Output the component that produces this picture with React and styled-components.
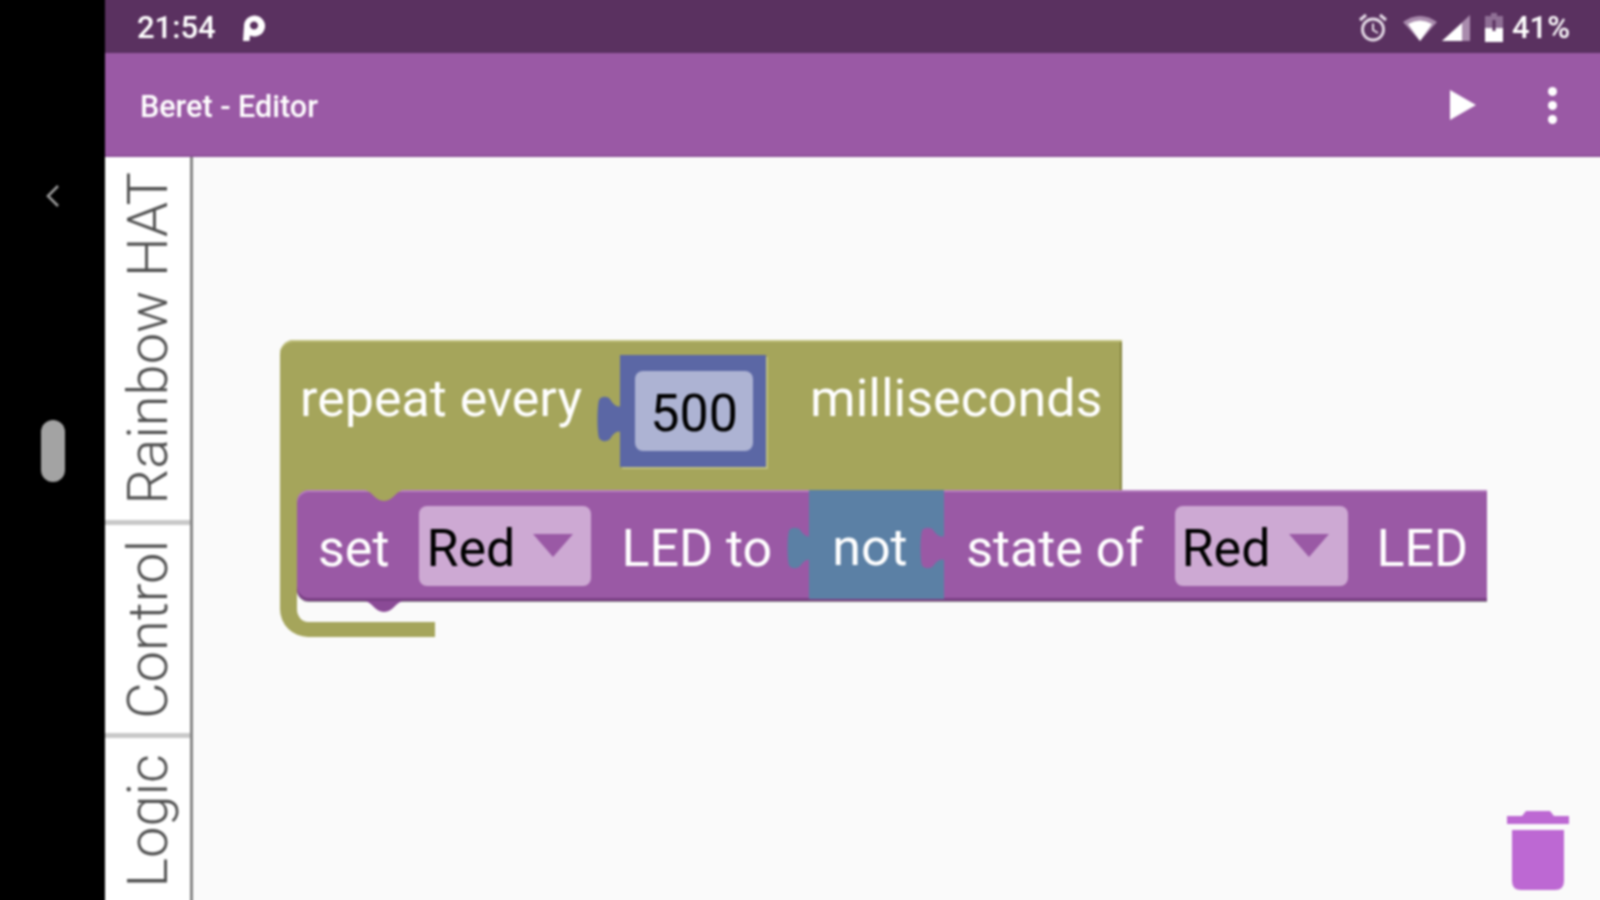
import React from "react";
import styled, { createGlobalStyle } from "styled-components";

const GlobalStyle = createGlobalStyle`
  html { overflow: hidden; }
  html, body { margin: 0; padding: 0; background: #000; }
  #root { width: 1604px; height: 908px; }
`;

const Socket = ({ color, left, top, height, right }) => (
  <SocketShape $left={left} $right={right} $top={top} width="24" height={height} viewBox="0 0 24 46" preserveAspectRatio="none">
    <path d="M24 10 C20 12 16 8 13 3 C10 0 4 0 2 4 C0 12 0 34 2 42 C4 46 10 46 13 43 C16 38 20 34 24 36 Z" fill={color} />
  </SocketShape>
);

export default function App() {
  return (
    <>
      <GlobalStyle />
      <Page>
        <Rail>
          <svg width="16" height="26" viewBox="0 0 16 26">
            <path d="M13 3 L3 13 L13 23" fill="none" stroke="#9a9a9a" strokeWidth="2.6" />
          </svg>
          <Pill />
        </Rail>
        <Main>
          <StatusBar>
            <Time>21:54</Time>
            <svg width="24" height="28" viewBox="0 0 24 28">
              <path d="M2 27 L3 12 a10.500 10.500 0 1 1 6 9.500 L8.500 27 Z M13 7.500 a4 4 0 1 0 0.010 0 Z" fill="#fff" fillRule="evenodd" />
            </svg>
            <StatusRight>
              <svg width="30" height="30" viewBox="0 0 30 30">
                <circle cx="15" cy="16.500" r="10.500" fill="none" stroke="#e6dde8" strokeWidth="2.800" />
                <path d="M15 10.500 V17 L20 20" fill="none" stroke="#e6dde8" strokeWidth="2" />
                <path d="M2 7 L8 2 M28 7 L22 2" stroke="#e6dde8" strokeWidth="3" />
              </svg>
              <WifiIcon width="36" height="28" viewBox="0 0 36 28">
                <path d="M1 8 Q18 -4 35 8 L18 27 Z" fill="#a98bad" />
                <path d="M6 10 Q18 3 30 10 L18 27 Z" fill="#fff" />
              </WifiIcon>
              <SignalIcon width="28" height="28" viewBox="0 0 28 28">
                <path d="M28 1 V27 H0 Z" fill="#a98bad" />
                <path d="M20 9 V27 H0 Z" fill="#fff" />
              </SignalIcon>
              <BatteryIcon width="18" height="29" viewBox="0 0 18 29">
                <path d="M6 0 H12 V3 H18 V29 H0 V3 H6 Z" fill="#8f6f95" />
                <path d="M0 15 H18 V29 H0 Z" fill="#fff" />
                <path d="M9 7 V18" stroke="#5a3160" strokeWidth="3" />
              </BatteryIcon>
              <Battery>41%</Battery>
            </StatusRight>
          </StatusBar>
          <AppBar>
            <Title>Beret - Editor</Title>
            <Actions>
              <svg width="28" height="32" viewBox="0 0 28 32">
                <path d="M1 1 L27 16 L1 31 Z" fill="#fff" />
              </svg>
              <Dots>
                <i /><i /><i />
              </Dots>
            </Actions>
          </AppBar>
          <Content>
            <Sidebar>
              <Tab $height={368}><TabLabel>Rainbow HAT</TabLabel></Tab>
              <Tab $height={213}><TabLabel>Control</TabLabel></Tab>
              <Tab $height={171}><TabLabel>Logic</TabLabel></Tab>
            </Sidebar>
            <Workspace>
              <RepeatBlock>
                <RepeatHead>
                  <Label>repeat every</Label>
                  <ValueBlock>
                    <Socket color="#5b67a5" left={-23} top={41} height={46} />
                    <ValueField>500</ValueField>
                  </ValueBlock>
                  <Label>milliseconds</Label>
                </RepeatHead>
                <RepeatBody>
                  <SetRow>
                    <NotchTop />
                    <NotchBottom />
                    <RowLabel $left={21}>set</RowLabel>
                    <Dropdown $left={30} $width={172}>
                      Red<Caret />
                    </Dropdown>
                    <RowLabel $left={30}>LED to</RowLabel>
                    <NotBlock>
                      <Socket color="#5b80a5" left={-22} top={37} height={42} />
                      <RowLabel>not</RowLabel>
                      <Socket color="#9a59a5" right={0} top={37} height={42} />
                    </NotBlock>
                    <RowLabel $left={22}>state of</RowLabel>
                    <Dropdown $left={31} $width={173}>
                      Red<Caret />
                    </Dropdown>
                    <RowLabel $left={29}>LED</RowLabel>
                  </SetRow>
                </RepeatBody>
              </RepeatBlock>
              <Trash>
                <svg width="64" height="82" viewBox="0 0 64 82">
                  <path d="M1 15 V7 H16 L20 2 H44 L48 7 H63 V15 Z" fill="#bd68d3" />
                  <path d="M6 21 H58 V72 Q58 81 49 81 H15 Q6 81 6 72 Z" fill="#bd68d3" />
                </svg>
              </Trash>
            </Workspace>
          </Content>
        </Main>
      </Page>
    </>
  );
}

let Page = styled.div`
  display: flex;
  width: 1604px;
  height: 908px;
  margin-top: -4px;
  background: #000;
  overflow: hidden;
  font-family: Roboto, "Liberation Sans", sans-serif;
  filter: blur(0.8px);
`;

let Rail = styled.div`
  width: 105px;
  flex: none;
  display: flex;
  flex-direction: column;
  align-items: center;
  padding-top: 187px;
  gap: 211px;
`;

let Pill = styled.div`
  width: 24px;
  height: 62px;
  border-radius: 12px;
  background: #a3a3a3;
`;

let Main = styled.div`
  flex: 1;
  min-width: 0;
  display: flex;
  flex-direction: column;
`;

let StatusBar = styled.div`
  height: 57px;
  flex: none;
  box-sizing: border-box;
  display: flex;
  align-items: center;
  gap: 25px;
  padding: 6px 34px 0 32px;
  background: #5a3160;
  color: #fff;
`;

let Time = styled.span`
  font-size: 31px;
  font-weight: 500;
`;

let StatusRight = styled.div`
  margin-left: auto;
  display: flex;
  align-items: center;
`;

let WifiIcon = styled.svg`
  margin-left: 14px;
`;

let SignalIcon = styled.svg`
  margin-left: 4px;
`;

let BatteryIcon = styled.svg`
  margin-left: 15px;
`;

let Battery = styled.span`
  margin-left: 9px;
  font-size: 31px;
  font-weight: 500;
`;

let AppBar = styled.div`
  height: 104px;
  flex: none;
  box-sizing: border-box;
  display: flex;
  align-items: center;
  padding: 3px 47px 0 35px;
  background: #9a59a5;
  box-shadow: inset 0 -2px 0 #8d4f99;
  color: #fff;
`;

let Title = styled.div`
  font-size: 30.500px;
  font-weight: 500;
`;

let Actions = styled.div`
  margin-left: auto;
  display: flex;
  align-items: center;
  gap: 71px;
  margin-top: -3px;
`;

let Dots = styled.div`
  display: flex;
  flex-direction: column;
  gap: 5px;

  i {
    width: 9px;
    height: 9px;
    border-radius: 50%;
    background: #fff;
  }
`;

let Content = styled.div`
  flex: 1;
  min-height: 0;
  display: flex;
`;

let Sidebar = styled.div`
  width: 85px;
  flex: none;
  background: #fff;
  border-right: 3px solid #858585;
  overflow: hidden;
`;

let Tab = styled.div`
  height: ${(p) => p.$height}px;
  box-sizing: border-box;
  display: flex;
  align-items: center;
  justify-content: center;
  border-bottom: 5px solid #c9c9c9;
`;

let TabLabel = styled.span`
  writing-mode: vertical-rl;
  transform: rotate(180deg);
  font-size: 56px;
  font-weight: 300;
  line-height: 1;
  color: #505050;
  white-space: nowrap;
`;

let Workspace = styled.div`
  flex: 1;
  position: relative;
  min-width: 0;
  padding: 183px 0 0 87px;
  background: #fafafa;
`;

let RepeatBlock = styled.div`
  display: flex;
  flex-direction: column;
`;

let RepeatHead = styled.div`
  width: 842px;
  height: 150px;
  box-sizing: border-box;
  display: flex;
  align-items: flex-start;
  padding: 30px 0 0 20px;
  background: #a5a55b;
  border-top-left-radius: 14px;
  box-shadow: inset 0 2px 0 #c0c07c, inset -2px 0 0 #84843f;
`;

let Label = styled.span`
  font-size: 52px;
  line-height: 58px;
  color: #fff;
  white-space: nowrap;
`;

let ValueBlock = styled.div`
  position: relative;
  width: 146px;
  height: 112px;
  box-sizing: border-box;
  flex: none;
  margin: -15px 44px 0 38px;
  padding: 16px 13px 16px 15px;
  background: #5b67a5;
  box-shadow: 2px 2px 0 #c0c07c;
`;

let SocketShape = styled.svg`
  position: absolute;
  ${(p) => (p.$right !== undefined ? `right: ${p.$right}px;` : `left: ${p.$left}px;`)}
  top: ${(p) => p.$top}px;
`;

let ValueField = styled.div`
  height: 100%;
  display: flex;
  align-items: center;
  justify-content: center;
  border-radius: 8px;
  background: #adb3d3;
  color: #000;
  font-size: 52px;
  padding-top: 4px;
  box-sizing: border-box;
`;

let RepeatBody = styled.div`
  width: 155px;
  height: 147px;
  box-sizing: border-box;
  border-left: 17px solid #a5a55b;
  border-bottom: 15px solid #a5a55b;
  border-bottom-left-radius: 28px;
  background: linear-gradient(#a5a55b 14px, transparent 14px) no-repeat;
`;

let SetRow = styled.div`
  position: relative;
  width: 1190px;
  height: 111px;
  box-sizing: border-box;
  display: flex;
  align-items: center;
  background: #9a59a5;
  border-radius: 12px 0 0 12px;
  box-shadow: inset 0 2px 0 #b77fc0, inset 0 -3px 0 #7a3f85, 0 1px 0 #8a8a8a;
`;

let NotchTop = styled.div`
  position: absolute;
  left: 68px;
  top: 0;
  width: 38px;
  height: 11px;
  background: #a5a55b;
  clip-path: path("M0 0 C8 2 10 11 19 11 C28 11 30 2 38 0 Z");
`;

let NotchBottom = styled.div`
  position: absolute;
  left: 68px;
  bottom: -11px;
  width: 38px;
  height: 11px;
  background: #8a4a96;
  clip-path: path("M0 0 C8 2 10 11 19 11 C28 11 30 2 38 0 Z");
`;

let RowLabel = styled.span`
  margin-left: ${(p) => p.$left || 0}px;
  padding-top: 6px;
  font-size: 52px;
  color: #fff;
  white-space: nowrap;
`;

let Dropdown = styled.div`
  width: ${(p) => p.$width}px;
  height: 80px;
  flex: none;
  box-sizing: border-box;
  margin-left: ${(p) => p.$left}px;
  padding: 6px 0 0 7px;
  display: flex;
  align-items: center;
  border-radius: 8px;
  background: #cda9d3;
  color: #000;
  font-size: 52px;
`;

let Caret = styled.div`
  width: 0;
  height: 0;
  margin: -6px 0 0 18px;
  border-left: 20px solid transparent;
  border-right: 20px solid transparent;
  border-top: 23px solid #9a59a5;
`;

let NotBlock = styled.div`
  position: relative;
  width: 135px;
  height: 109px;
  flex: none;
  align-self: flex-start;
  box-sizing: border-box;
  display: flex;
  align-items: center;
  padding-left: 23px;
  margin-left: 37px;
  background: #5b80a5;
`;

let Trash = styled.div`
  position: absolute;
  right: 34px;
  bottom: 13px;
  line-height: 0;
`;
